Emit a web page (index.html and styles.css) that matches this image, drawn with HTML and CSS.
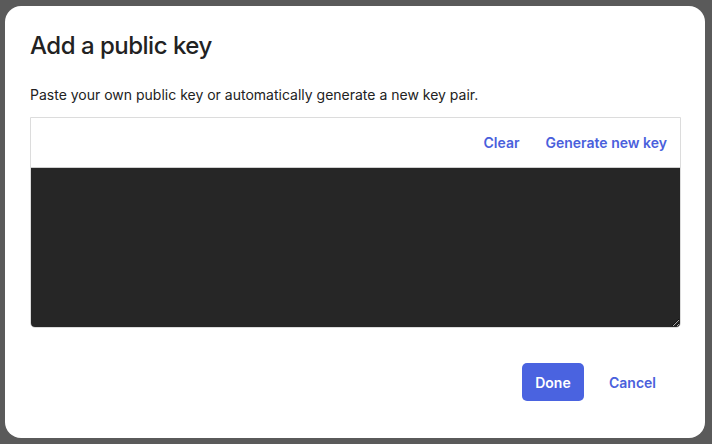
FILE: index.html
```html
<!DOCTYPE html>
<html>
<head>
<meta charset="utf-8">
<link rel="stylesheet" href="styles.css">
</head>
<body>
<div class="backdrop">
  <div class="dialog">
    <h1 class="title">Add a public key</h1>
    <p class="desc">Paste your own public key or automatically generate a new key pair.</p>
    <div class="keybox">
      <div class="keybox-head">
        <a class="link">Clear</a>
        <a class="link">Generate new key</a>
      </div>
      <textarea class="keyarea"></textarea>
    </div>
    <div class="actions">
      <button class="btn-primary">Done</button>
      <button class="btn-text">Cancel</button>
    </div>
  </div>
</div>
</body>
</html>
```
FILE: styles.css
```css
html, body {
  margin: 0;
  padding: 0;
  height: 100%;
}
body {
  background: #5a5a5a;
  font-family: Inter, "Noto Sans", sans-serif;
}
.backdrop {
  box-sizing: border-box;
  height: 100%;
  padding: 6px 7px 6px 5px;
}
.dialog {
  box-sizing: border-box;
  height: 432px;
  background: #fff;
  border-radius: 16px;
  padding: 26px 24px 0 25px;
  display: flex;
  flex-direction: column;
}
.title {
  margin: 0;
  font-size: 24px;
  font-weight: 500;
  color: #222;
  line-height: 28px;
  letter-spacing: -0.5px;
}
.desc {
  margin: 26px 0 0;
  font-size: 14px;
  line-height: 18px;
  color: #222;
}
.keybox {
  margin-top: 13px;
  border: 1px solid #dcdcdc;
  border-radius: 0 0 5px 5px;
  display: flex;
  flex-direction: column;
  overflow: hidden;
}
.keybox-head {
  height: 49px;
  display: flex;
  justify-content: flex-end;
  align-items: center;
  gap: 26px;
  padding-right: 13px;
  border-bottom: 1px solid #cfcfcf;
}
.link {
  color: #4a5fdc;
  font-weight: 600;
  font-size: 14px;
  cursor: pointer;
}
.keyarea {
  display: block;
  box-sizing: border-box;
  height: 159px;
  margin: 0;
  border: none;
  background: #262626;
  color: #eee;
  resize: vertical;
  outline: none;
  padding: 8px;
}
.actions {
  margin-top: 35px;
  display: flex;
  justify-content: flex-end;
  align-items: center;
  gap: 25px;
  padding-right: 25px;
}
.btn-primary {
  background: #4a63e0;
  color: #fff;
  border: none;
  border-radius: 5px;
  height: 38px;
  width: 62px;
  font-family: inherit;
  font-size: 14px;
  font-weight: 600;
}
.btn-text {
  background: none;
  border: none;
  color: #4a5fdc;
  font-family: inherit;
  font-size: 14px;
  font-weight: 600;
  padding: 0;
}
```
